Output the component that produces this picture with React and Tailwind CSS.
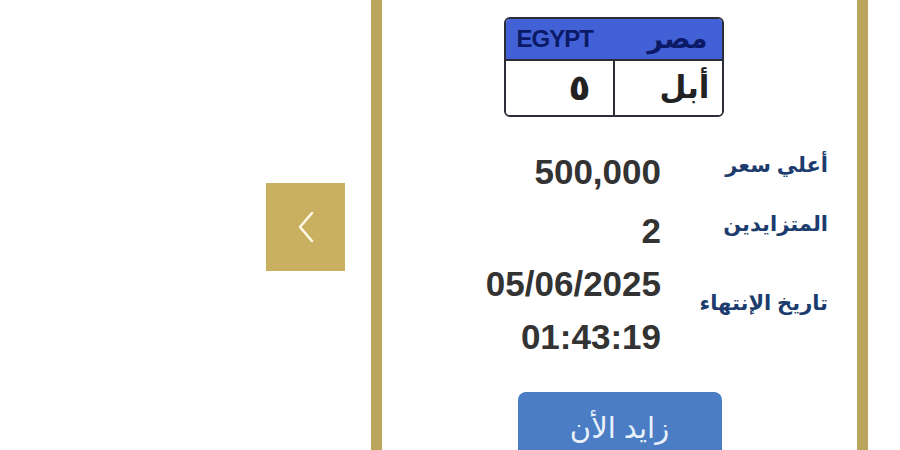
export default function App() {
  const rows = [
    { label: 'أعلي سعر', value: ['500,000'], gap: 'mt-0' },
    { label: 'المتزايدين', value: ['2'], gap: 'mt-[6px]' },
    { label: 'تاريخ الإنتهاء', value: ['05/06/2025', '01:43:19'], gap: 'mt-0' },
  ];

  return (
    <div className="h-[450px] w-[900px] overflow-hidden bg-white flex font-['Liberation_Sans','DejaVu_Sans',sans-serif]">
      {/* arrow column */}
      <div className="w-[371px] flex items-start">
        <button className="ml-[266px] mt-[183px] w-[79px] h-[88px] bg-[#c8b060] flex items-center justify-center">
          <svg width="28" height="40" viewBox="0 0 28 40" fill="none">
            <path d="M20 6 L8 20 L20 34" stroke="#fffbea" strokeWidth="2.5" strokeLinecap="round" strokeLinejoin="round" />
          </svg>
        </button>
      </div>

      {/* card */}
      <div className="w-[497px] h-full border-x-[11px] border-[#b9a55c] flex flex-col items-center">
        {/* plate */}
        <div className="mt-[17px] ml-[-12px] w-[220px] h-[100px] shrink-0 border-2 border-[#2d2d3a] rounded-md overflow-hidden flex flex-col">
          <div dir="rtl" className="h-[41px] bg-[#4361d6] flex items-center justify-between pl-[11px] pr-[14px] font-bold text-[#0b1a66]">
            <span className="text-[27px] font-bold leading-none">مصر</span>
            <span className="text-[24px] font-bold leading-none tracking-[-1px]">EGYPT</span>
          </div>
          <div dir="rtl" className="flex-1 flex border-t-2 border-[#2d2d3a] bg-white">
            <div className="w-[109px] border-l-2 border-[#2d2d3a] flex items-center px-[12px] text-[31px] font-bold text-[#222]">
              أبل
            </div>
            <div className="flex-1 flex items-center px-[22px] text-[36px] font-bold text-[#222]">
              ٥
            </div>
          </div>
        </div>

        {/* details */}
        <div dir="rtl" className="self-stretch mt-[28px] pr-[29px] flex flex-col">
          {rows.map((r) => (
            <div key={r.label} className={`grid grid-cols-[167px_auto] items-center ${r.gap}`}>
              <div className="text-[21px] leading-[30px] font-bold text-[#1d3c6e] mb-[14px]">{r.label}</div>
              <div dir="ltr" className="flex flex-col items-end w-[200px] text-[35px] leading-[53px] font-bold text-[#333]">
                {r.value.map((v) => (
                  <span key={v}>{v}</span>
                ))}
              </div>
            </div>
          ))}
        </div>

        <button className="mt-[29px] w-[204px] h-[80px] shrink-0 rounded-lg bg-[#4a7dc4] text-[#eaf1fb] text-[29px] leading-[34px] pt-[19px] flex justify-center items-start">
          زايد الأن
        </button>
      </div>
    </div>
  );
}
